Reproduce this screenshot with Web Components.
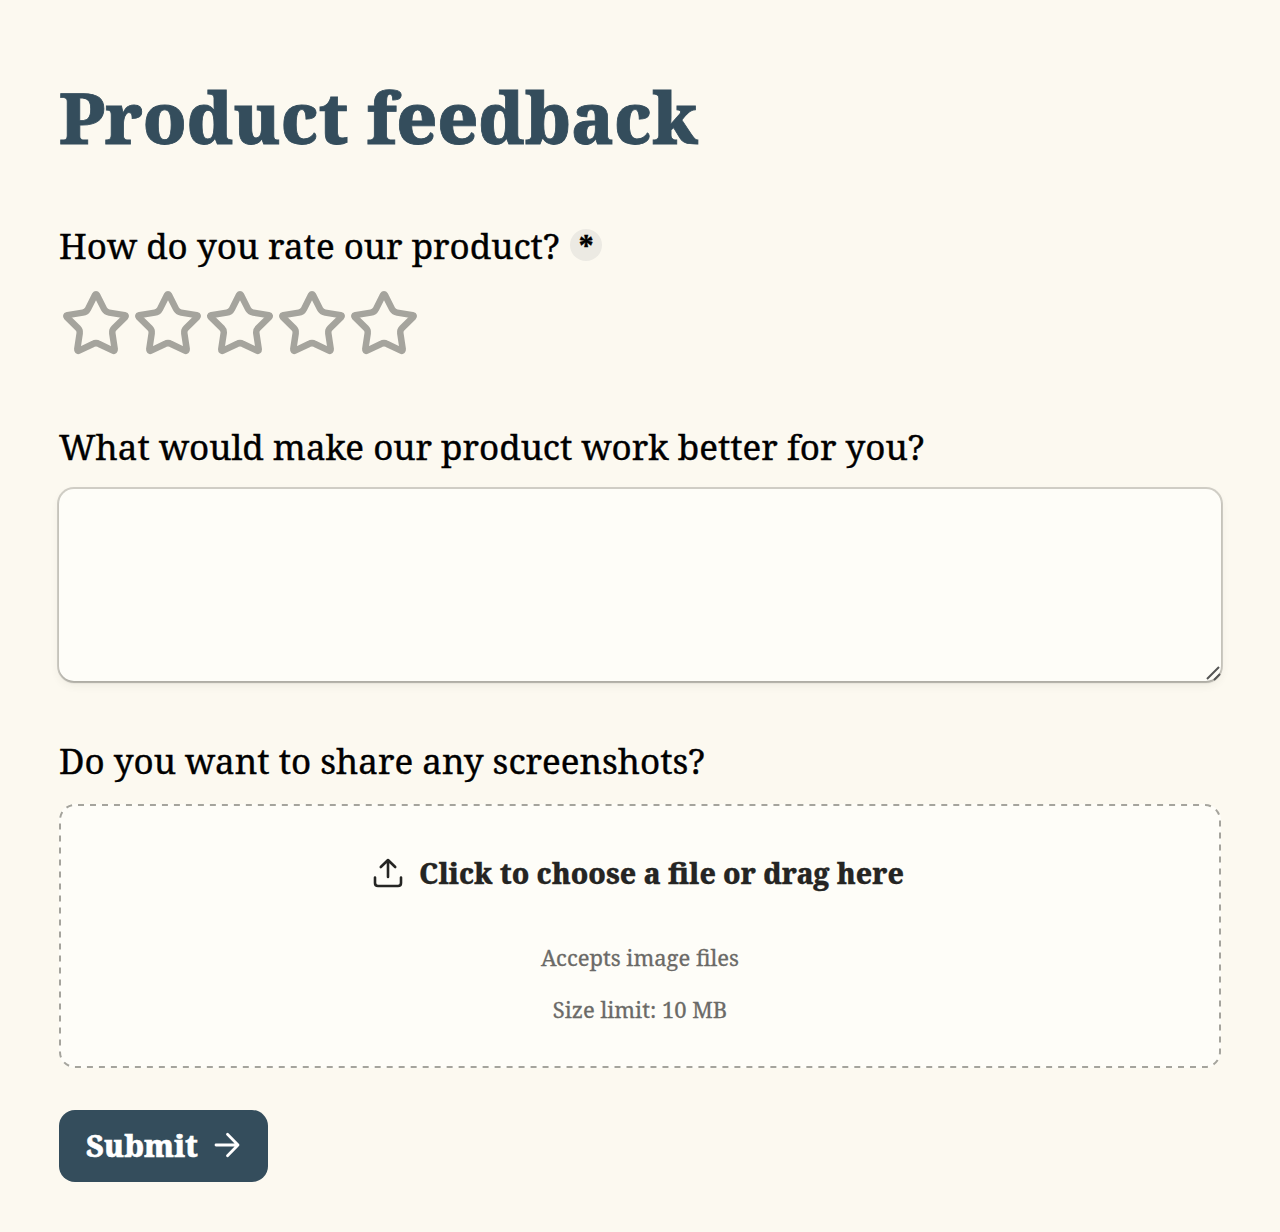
<!DOCTYPE html>
<html lang="en">
<head>
<meta charset="utf-8">
<title>Product feedback</title>
<style>
html,body{margin:0;background:#fcf9f0}
body{font-family:"Noto Serif",serif;color:#000}
</style>
</head>
<body>
<feedback-form>
  <form-title>Product feedback</form-title>
  <form-field class="rating"><question-label slot="label" required>How do you rate our product?</question-label><star-rating count="5"></star-rating></form-field>
  <form-field class="text"><question-label slot="label">What would make our product work better for you?</question-label><long-answer></long-answer></form-field>
  <form-field class="files"><question-label slot="label">Do you want to share any screenshots?</question-label>
    <file-drop>Click to choose a file or drag here<span slot="hint">Accepts image files</span><span slot="limit">Size limit: 10 MB</span></file-drop>
  </form-field>
  <submit-button>Submit</submit-button>
</feedback-form>
<script>
const define = (name, html) => customElements.define(name, class extends HTMLElement {
  constructor() {
    super();
    this.attachShadow({mode: 'open'}).innerHTML = typeof html === 'function' ? html(this) : html;
  }
});

define('feedback-form', `<style>
:host{display:flex;flex-direction:column;box-sizing:border-box;height:1232px;padding:75px 59px 0;overflow:hidden}
::slotted(.rating){margin-top:63px}
::slotted(.text){margin-top:63px}
::slotted(.files){margin-top:56px}
::slotted(submit-button){margin-top:42px}
</style><slot></slot>`);

define('form-title', `<style>
:host{display:block;height:84px}
h1{margin:0;font-size:70px;line-height:84px;font-weight:800;color:#344d5c;-webkit-text-stroke:.8px #344d5c}
</style><h1><slot></slot></h1>`);

define('form-field', `<style>
:host{display:flex;flex-direction:column}
</style><slot name="label"></slot><slot></slot>`);

define('question-label', el => `<style>
:host{display:flex;align-items:center;gap:10.6px;height:48px;font-size:34.97px;line-height:48px;white-space:nowrap;-webkit-text-stroke:.4px #000}
.badge{display:flex;justify-content:center;width:32px;height:32px;margin-bottom:2px;border-radius:50%;background:#eceae3;font-size:28px;line-height:35px;font-weight:900}
</style><span><slot></slot></span>${el.hasAttribute('required') ? '<span class="badge">*</span>' : ''}`);

define('star-rating', el => `<style>
:host{display:flex;height:72px;padding:18px 0 0 1px}
svg{width:72px;height:72px;fill:none;stroke:#a5a49d;stroke-width:6.5;stroke-linejoin:round}
</style>${'<svg viewBox="0 0 72 72"><path d="M37 7L44 20.9Q45.7 24.1 49.2 24.6L64.6 27.1Q66.6 27.6 65.2 29.2L54 40.1Q51.9 42.2 52.3 45.2L54.7 61.1Q54.9 63.5 53 62.6L39.1 56Q36 54.2 32.9 56L19 62.6Q17.1 63.5 17.3 61.1L19.7 45.2Q20.1 42.2 18 40.1L6.8 29.2Q5.4 27.6 7.4 27.1L22.8 24.6Q26.3 24.1 28 20.9L35 7Q36 5.4 37 7Z"/></svg>'.repeat(+el.getAttribute('count'))}`);

define('long-answer', `<style>
:host{display:flex;justify-content:flex-end;align-items:flex-end;height:192px;margin-top:18px;border-radius:15px;background:#fefdf8;box-shadow:0 0 0 2px rgba(61,59,53,.22),0 2px 2px rgba(0,0,0,.14),0 4px 10px rgba(61,59,53,.08)}
svg{width:16px;height:16px;fill:none;stroke:#555;stroke-width:2}
</style><svg viewBox="0 0 16 16"><path d="M2 14L14 2M9 15L15 9"/></svg>`);

define('file-drop', `<style>
:host{display:flex;position:relative;flex-direction:column;align-items:center;box-sizing:border-box;height:264px;margin-top:19px;padding-top:49px;border-radius:16px;background:#fefdf8}
.outline{position:absolute;inset:0;width:100%;height:100%;fill:none;stroke:#a5a49d;stroke-width:2;stroke-dasharray:6 6;stroke-dashoffset:-3}
.action{display:flex;align-items:center;gap:16px;height:40px;font-size:28px;line-height:40px;font-weight:800;color:#252523;margin-right:3px;-webkit-text-stroke:.3px #252523}
.icon{width:30px;height:30px;fill:none;stroke:#252523;stroke-width:2.6;stroke-linecap:round;stroke-linejoin:round}
.notes{display:flex;flex-direction:column;align-items:center;gap:22px;margin-top:49px;font-size:22px;line-height:30px;color:#6b6a67;-webkit-text-stroke:.3px #6b6a67}
</style><svg class="outline" viewBox="0 0 1162 264"><rect x="1" y="1" width="1160" height="262" rx="15" pathLength="2820"/></svg>
<div class="action"><svg class="icon" viewBox="0 0 30 30"><path d="M15 19V2.5M7.8 9L15 2L22.2 9M2 19.5V25Q2 28 5 28H25Q28 28 28 25V19.5"/></svg><span><slot></slot></span></div>
<div class="notes"><slot name="hint"></slot><slot name="limit"></slot></div>`);

define('submit-button', `<style>
:host{display:block}
button{display:flex;align-items:center;gap:16px;width:209px;height:72px;padding:0 0 2px 27px;border:0;border-radius:16px;background:#344d5c;color:#fff;font:800 30px/40px "Noto Serif",serif;-webkit-text-stroke:.5px #fff}
span{padding-top:2px}
svg{width:26px;height:26px;fill:none;stroke:#fff;stroke-width:2.8;stroke-linecap:round;stroke-linejoin:round}
</style><button type="button"><span><slot></slot></span><svg viewBox="0 0 26 26"><path d="M2 13H24M13.5 2.3L24 13L13.5 23.7"/></svg></button>`);
</script>
</body>
</html>
